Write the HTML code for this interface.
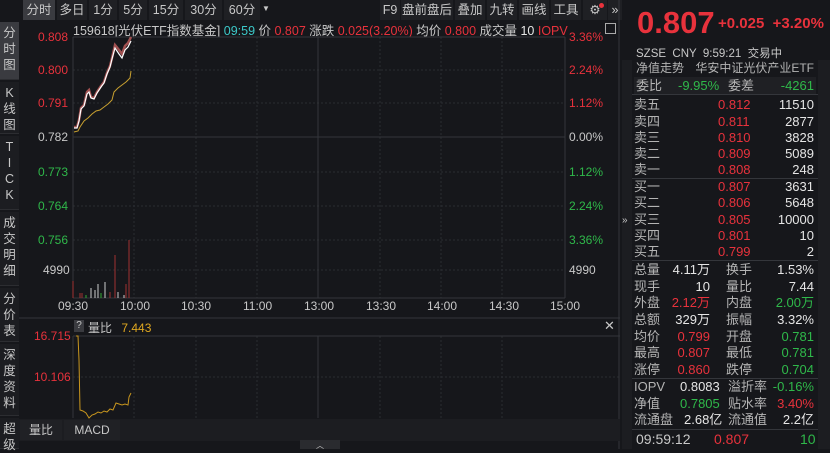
<!DOCTYPE html><html><head><meta charset="utf-8"><style>
*{margin:0;padding:0;box-sizing:border-box}
body{width:830px;height:449px;background:#16171b;font-family:"Liberation Sans","Noto Sans CJK SC",sans-serif;color:#c8c8c8;font-size:12px;position:relative;overflow:hidden}
.a{position:absolute;white-space:nowrap}
.r{color:#e8323c}.g{color:#2fb84a}.w{color:#e6e6e6}.y{color:#e0a820}.c{color:#3cc8c8}
.tab{position:absolute;top:0;height:20px;line-height:20px;background:#1f2024;text-align:center;color:#c8c8c8;font-size:12.5px}
.side{position:absolute;left:0;width:19px;background:#1c1d21;color:#c8c8c8;font-size:12.5px;text-align:center;line-height:16px;border-bottom:1px solid #2c2d31}
.row{position:absolute;left:634px;width:182px;height:17px;line-height:17px;font-size:13px;color:#b4b4b4}
.row span{position:absolute}
</style></head><body>
<div class="tab" style="left:23px;width:32px;background:#3a3b40">分时</div>
<div class="tab" style="left:57px;width:30px">多日</div>
<div class="tab" style="left:89px;width:28px">1分</div>
<div class="tab" style="left:119px;width:28px">5分</div>
<div class="tab" style="left:149px;width:34px">15分</div>
<div class="tab" style="left:185px;width:37px">30分</div>
<div class="tab" style="left:224px;width:36px">60分</div>
<div class="a" style="left:262px;top:4px;font-size:8px">▼</div>
<div class="tab" style="left:380px;width:20px">F9</div>
<div class="tab" style="left:401px;width:52px">盘前盘后</div>
<div class="tab" style="left:455px;width:30px">叠加</div>
<div class="tab" style="left:487px;width:30px">九转</div>
<div class="tab" style="left:519px;width:30px">画线</div>
<div class="tab" style="left:551px;width:30px">工具</div>
<div class="tab" style="left:583px;width:24px">⚙</div>
<div class="a" style="left:599px;top:3px;width:5px;height:5px;border-radius:3px;background:#e8323c"></div>
<div class="tab" style="left:608px;width:14px">»</div>
<div class="side" style="top:22px;height:58px;background:#3a3b40;padding-top:3px">分<br>时<br>图</div>
<div class="side" style="top:82px;height:52px;padding-top:3px">K<br>线<br>图</div>
<div class="side" style="top:136px;height:74px;padding-top:3px">T<br>I<br>C<br>K</div>
<div class="side" style="top:212px;height:74px;padding-top:3px">成<br>交<br>明<br>细</div>
<div class="side" style="top:288px;height:54px;padding-top:3px">分<br>价<br>表</div>
<div class="side" style="top:344px;height:72px;padding-top:3px">深<br>度<br>资<br>料</div>
<div class="side" style="top:418px;height:31px;padding-top:3px">超<br>级</div>
<div class="a" style="left:73px;top:20px;font-size:12.5px">159618[光伏ETF指数基金] <span class="c">09:59</span> 价 <span class="r">0.807</span> 涨跌 <span class="r">0.025(3.20%)</span> 均价 <span class="r">0.800</span> 成交量 <span class="w">10</span> <span class="r">IOPV</span></div>
<div class="a" style="left:605px;top:23px;width:11px;height:11px;border:1px solid #aaa"></div>
<svg class="a" style="left:0;top:0" width="620" height="449">
<g stroke="#2a2c31" stroke-dasharray="2,2" stroke-width="1">
<line x1="73" y1="70" x2="565" y2="70"/><line x1="73" y1="103" x2="565" y2="103"/><line x1="73" y1="172" x2="565" y2="172"/><line x1="73" y1="206" x2="565" y2="206"/><line x1="73" y1="240" x2="565" y2="240"/><line x1="73" y1="270" x2="565" y2="270"/>
<line x1="134" y1="37" x2="134" y2="298"/><line x1="196" y1="37" x2="196" y2="298"/><line x1="257" y1="37" x2="257" y2="298"/><line x1="380" y1="37" x2="380" y2="298"/><line x1="441" y1="37" x2="441" y2="298"/><line x1="502" y1="37" x2="502" y2="298"/>
<line x1="134" y1="336" x2="134" y2="418"/><line x1="196" y1="336" x2="196" y2="418"/><line x1="257" y1="336" x2="257" y2="418"/><line x1="380" y1="336" x2="380" y2="418"/><line x1="441" y1="336" x2="441" y2="418"/><line x1="502" y1="336" x2="502" y2="418"/>
<line x1="73" y1="377" x2="620" y2="377"/>
</g>
<g stroke="#34363b"><line x1="73" y1="37" x2="565" y2="37"/><line x1="73" y1="137" x2="565" y2="137"/><line x1="73" y1="298" x2="565" y2="298"/><line x1="73" y1="37" x2="73" y2="298"/><line x1="318" y1="37" x2="318" y2="298"/><line x1="565" y1="37" x2="565" y2="298"/><line x1="19" y1="318" x2="620" y2="318"/><line x1="73" y1="336" x2="73" y2="418"/><line x1="318" y1="336" x2="318" y2="418"/><line x1="73" y1="336" x2="620" y2="336"/><line x1="619" y1="0" x2="619" y2="449"/></g>
<polyline fill="none" stroke="#c8a030" stroke-width="1" points="74,132 78,131 80,127 84,121 88,118 92,114 96,111 100,110 104,107 108,104 112,100 114,92 118,88 122,85 126,82 130,78 131,71"/>
<polyline fill="none" stroke="#a05050" stroke-width="2.5" points="74,127 77,127 79,120 81,108 84,105 87,92 89,90 91,97 94,98 97,92 101,86 104,82 107,73 110,66 112,58 115,45 119,50 122,54 125,46 128,43 131,37"/>
<polyline fill="none" stroke="#fff" stroke-width="1.2" points="74,128 77,128 79,121 81,109 84,106 87,94 89,92 91,98 94,99 97,93 101,87 104,83 107,74 110,67 112,59 115,48 119,54 122,58 125,50 128,47 131,41"/>
<g stroke-width="1">
<line x1="73" y1="298" x2="73" y2="281" stroke="#a03030"/><line x1="80" y1="298" x2="80" y2="293" stroke="#a03030"/><line x1="82" y1="298" x2="82" y2="293" stroke="#a03030"/><line x1="86" y1="298" x2="86" y2="295" stroke="#3a3"/><line x1="91" y1="298" x2="91" y2="288" stroke="#ccc"/><line x1="95" y1="298" x2="95" y2="290" stroke="#ccc"/><line x1="98" y1="298" x2="98" y2="284" stroke="#ccc"/><line x1="101" y1="298" x2="101" y2="293" stroke="#3a3"/><line x1="105" y1="298" x2="105" y2="282" stroke="#ccc"/><line x1="110" y1="298" x2="110" y2="292" stroke="#a03030"/><line x1="115" y1="298" x2="115" y2="255" stroke="#a03030"/><line x1="118" y1="298" x2="118" y2="292" stroke="#ccc"/><line x1="124" y1="298" x2="124" y2="295" stroke="#ccc"/><line x1="126" y1="298" x2="126" y2="284" stroke="#a03030"/><line x1="129" y1="298" x2="129" y2="240" stroke="#a03030"/>
</g>
<polyline fill="none" stroke="#c8961e" stroke-width="1" points="76,336 78,336 79,360 80,410 83,411 86,413 89,418 92,415 95,414 98,412 101,413 104,411 107,412 110,409 113,410 116,403 119,404 122,405 125,404 128,405 129,397 131,393"/>
</svg>
<div class="a r" style="left:38px;top:30px">0.808</div>
<div class="a r" style="left:38px;top:63px">0.800</div>
<div class="a r" style="left:38px;top:96px">0.791</div>
<div class="a" style="left:38px;top:130px">0.782</div>
<div class="a g" style="left:38px;top:165px">0.773</div>
<div class="a g" style="left:38px;top:199px">0.764</div>
<div class="a g" style="left:38px;top:233px">0.756</div>
<div class="a" style="left:43px;top:263px">4990</div>
<div class="a r" style="left:569px;top:30px">3.36%</div>
<div class="a r" style="left:569px;top:63px">2.24%</div>
<div class="a r" style="left:569px;top:96px">1.12%</div>
<div class="a" style="left:569px;top:130px">0.00%</div>
<div class="a g" style="left:569px;top:165px">1.12%</div>
<div class="a g" style="left:569px;top:199px">2.24%</div>
<div class="a g" style="left:569px;top:233px">3.36%</div>
<div class="a" style="left:569px;top:263px">4990</div>
<div class="a" style="left:58px;top:299px">09:30</div><div class="a" style="left:120px;top:299px">10:00</div><div class="a" style="left:181px;top:299px">10:30</div><div class="a" style="left:243px;top:299px">11:00</div><div class="a" style="left:304px;top:299px">13:00</div><div class="a" style="left:366px;top:299px">13:30</div><div class="a" style="left:427px;top:299px">14:00</div><div class="a" style="left:489px;top:299px">14:30</div><div class="a" style="left:550px;top:299px">15:00</div>
<div class="a" style="left:74px;top:320px;width:10px;height:12px;background:#3a3b40;font-size:10px;text-align:center">?</div>
<div class="a" style="left:88px;top:319px">量比 <span class="y" style="margin-left:6px">7.443</span></div>
<div class="a" style="left:604px;top:318px;font-size:13px">✕</div>
<div class="a r" style="left:34px;top:329px">16.715</div>
<div class="a r" style="left:34px;top:370px">10.106</div>
<div class="a" style="left:19px;top:419px;width:601px;height:22px;background:#1c1d21"></div>
<div class="a" style="left:20px;top:420px;width:42px;height:20px;background:#202125;line-height:20px;text-align:center">量比</div>
<div class="a" style="left:64px;top:420px;width:56px;height:20px;background:#202125;line-height:20px;text-align:center">MACD</div>
<div class="a" style="left:300px;top:440px;width:40px;height:9px;background:#2a2b2f;font-size:8px;text-align:center">︿</div>
<div class="a r" style="left:637px;top:5px;font-size:31px;font-weight:bold">0.807</div>
<div class="a r" style="left:718px;top:15px;font-size:15px;font-weight:bold">+0.025 &nbsp;+3.20%</div>
<div class="a" style="left:636px;top:45px;font-size:11.5px">SZSE &nbsp;CNY &nbsp;9:59:21 &nbsp;交易中</div>
<div class="a" style="left:622px;top:60px;width:10px;height:389px;background:#1c1d21;font-size:10px;padding-top:155px">»</div>
<div class="a" style="left:818px;top:60px;width:12px;height:389px;background:#1c1d21"></div>
<div class="row" style="top:60px;font-size:12px"><span style="left:2px">净值走势</span><span style="right:2px">华安中证光伏产业ETF</span></div>
<div class="row" style="top:77px;background:#1f2024"><span style="left:2px">委比</span><span class="g" style="left:44px">-9.95%</span><span style="left:94px">委差</span><span class="g" style="right:2px">-4261</span></div>
<div class="a" style="left:632px;top:94px;width:186px;border-top:1px solid #34363b"></div>
<div class="row" style="top:96px"><span>卖五</span><span class="r" style="left:84px">0.812</span><span class="w" style="right:2px">11510</span></div>
<div class="row" style="top:113px"><span>卖四</span><span class="r" style="left:84px">0.811</span><span class="w" style="right:2px">2877</span></div>
<div class="row" style="top:129px"><span>卖三</span><span class="r" style="left:84px">0.810</span><span class="w" style="right:2px">3828</span></div>
<div class="row" style="top:145px"><span>卖二</span><span class="r" style="left:84px">0.809</span><span class="w" style="right:2px">5089</span></div>
<div class="row" style="top:161px"><span>卖一</span><span class="r" style="left:84px">0.808</span><span class="w" style="right:2px">248</span></div>
<div class="a" style="left:632px;top:178px;width:186px;border-top:1px solid #34363b"></div>
<div class="row" style="top:178px"><span>买一</span><span class="r" style="left:84px">0.807</span><span class="w" style="right:2px">3631</span></div>
<div class="row" style="top:194px"><span>买二</span><span class="r" style="left:84px">0.806</span><span class="w" style="right:2px">5648</span></div>
<div class="row" style="top:211px"><span>买三</span><span class="r" style="left:84px">0.805</span><span class="w" style="right:2px">10000</span></div>
<div class="row" style="top:227px"><span>买四</span><span class="r" style="left:84px">0.801</span><span class="w" style="right:2px">10</span></div>
<div class="row" style="top:243px"><span>买五</span><span class="r" style="left:84px">0.799</span><span class="w" style="right:2px">2</span></div>
<div class="a" style="left:632px;top:260px;width:186px;border-top:1px solid #34363b"></div>
<div class="row" style="top:261px"><span>总量</span><span class="w" style="right:106px">4.11万</span><span style="left:92px">换手</span><span class="w" style="right:2px">1.53%</span></div>
<div class="row" style="top:278px"><span>现手</span><span class="w" style="right:106px">10</span><span style="left:92px">量比</span><span class="w" style="right:2px">7.44</span></div>
<div class="row" style="top:294px"><span>外盘</span><span class="r" style="right:106px">2.12万</span><span style="left:92px">内盘</span><span class="g" style="right:2px">2.00万</span></div>
<div class="row" style="top:311px"><span>总额</span><span class="w" style="right:106px">329万</span><span style="left:92px">振幅</span><span class="w" style="right:2px">3.32%</span></div>
<div class="row" style="top:328px"><span>均价</span><span class="r" style="right:106px">0.799</span><span style="left:92px">开盘</span><span class="g" style="right:2px">0.781</span></div>
<div class="row" style="top:344px"><span>最高</span><span class="r" style="right:106px">0.807</span><span style="left:92px">最低</span><span class="g" style="right:2px">0.781</span></div>
<div class="row" style="top:361px"><span>涨停</span><span class="r" style="right:106px">0.860</span><span style="left:92px">跌停</span><span class="g" style="right:2px">0.704</span></div>
<div class="a" style="left:632px;top:378px;width:186px;border-top:1px solid #34363b"></div>
<div class="row" style="top:378px"><span>IOPV</span><span class="w" style="left:46px">0.8083</span><span style="left:94px">溢折率</span><span class="g" style="right:2px">-0.16%</span></div>
<div class="row" style="top:395px"><span>净值</span><span class="g" style="left:46px">0.7805</span><span style="left:94px">贴水率</span><span class="r" style="right:2px">3.40%</span></div>
<div class="row" style="top:411px"><span>流通盘</span><span class="w" style="left:50px">2.68亿</span><span style="left:94px">流通值</span><span class="w" style="right:2px">2.2亿</span></div>
<div class="a" style="left:632px;top:429px;width:186px;border-top:1px solid #34363b"></div>
<div class="a" style="left:636px;top:431px;font-size:14px">09:59:12</div>
<div class="a r" style="left:714px;top:431px;font-size:14px">0.807</div>
<div class="a g" style="left:800px;top:431px;font-size:14px">10</div>
</body></html>
